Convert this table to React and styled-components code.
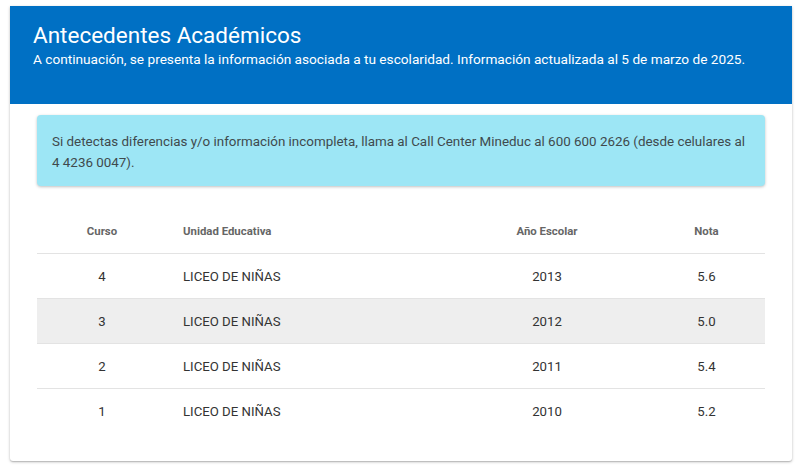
import React from "react";
import styled, { createGlobalStyle } from "styled-components";

const Global = createGlobalStyle`
  html, body { margin: 0; padding: 0; background: #fff; }
  body { font-family: Roboto, "Liberation Sans", Arial, sans-serif; }
`;

const Page = styled.div`
  padding: 6px 8px 12px 10px;
`;

const Card = styled.section`
  width: 782px;
  background: #fff;
  border-radius: 0 0 3px 3px;
  box-shadow: 0 1px 3px rgba(0,0,0,0.25), 0 1px 1px rgba(0,0,0,0.12);
  padding-bottom: 28px;
`;

const Header = styled.header`
  background: #0070c4;
  color: #fff;
  height: 98px;
  box-sizing: border-box;
  padding: 16px 23px 0 23px;
`;

const Title = styled.h1`
  margin: 0;
  font-size: 22.5px;
  font-weight: 400;
  line-height: 26px;
`;

const Subtitle = styled.p`
  margin: 2px 0 0;
  font-size: 13.65px;
  line-height: 18px;
`;

const Alert = styled.div`
  margin: 11px 27px 0 27px;
  background: #9de6f5;
  color: #3f4a4d;
  border-radius: 4px;
  box-shadow: 0 1px 3px rgba(0,0,0,0.25);
  padding: 16px 12px 13px 15px;
  font-size: 13.4px;
  line-height: 21px;
`;

const Table = styled.table`
  margin: 22px 27px 0 27px;
  width: 728px;
  table-layout: fixed;
  border-collapse: collapse;
  font-size: 13.2px;
  color: #333;
`;

const Th = styled.th`
  box-sizing: border-box;
  height: 45px;
  padding: 1px ${p => (p.$left ? "16px" : "0")} 0;
  font-size: 11.4px;
  font-weight: 700;
  color: #666;
  text-align: ${p => (p.$left ? "left" : "center")};
  width: ${p => p.$w}px;
  border-bottom: 1px solid #e3e3e3;
`;

const Tr = styled.tr`
  background: ${p => (p.$shade ? "#eeeeee" : "transparent")};
  border-bottom: ${p => (p.$last ? "none" : "1px solid #e3e3e3")};
`;

const Td = styled.td`
  height: 43px;
  padding: 1px ${p => (p.$left ? "16px" : "0")} 0;
  text-align: ${p => (p.$left ? "left" : "center")};
`;

const rows = [
  { curso: "4", unidad: "LICEO DE NIÑAS", anio: "2013", nota: "5.6" },
  { curso: "3", unidad: "LICEO DE NIÑAS", anio: "2012", nota: "5.0" },
  { curso: "2", unidad: "LICEO DE NIÑAS", anio: "2011", nota: "5.4" },
  { curso: "1", unidad: "LICEO DE NIÑAS", anio: "2010", nota: "5.2" },
];

export default function App() {
  return (
    <Page>
      <Global />
      <Card>
        <Header>
          <Title>Antecedentes Académicos</Title>
          <Subtitle>
            A continuación, se presenta la información asociada a tu escolaridad. Información actualizada al 5 de marzo de 2025.
          </Subtitle>
        </Header>
        <Alert>
          Si detectas diferencias y/o información incompleta, llama al Call Center Mineduc al 600 600 2626 (desde celulares al 4 4236 0047).
        </Alert>
        <Table>
          <thead>
            <tr>
              <Th $w={130}>Curso</Th>
              <Th $left $w={279}>Unidad Educativa</Th>
              <Th $w={202}>Año Escolar</Th>
              <Th $w={117}>Nota</Th>
            </tr>
          </thead>
          <tbody>
            {rows.map((r, i) => (
              <Tr key={r.curso} $shade={i === 1} $last={i === rows.length - 1}>
                <Td>{r.curso}</Td>
                <Td $left>{r.unidad}</Td>
                <Td>{r.anio}</Td>
                <Td>{r.nota}</Td>
              </Tr>
            ))}
          </tbody>
        </Table>
      </Card>
    </Page>
  );
}
